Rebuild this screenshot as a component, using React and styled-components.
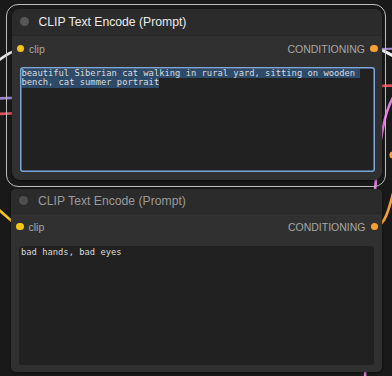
import React from 'react';
import styled, { createGlobalStyle } from 'styled-components';

const Global = createGlobalStyle`
  *, *::before, *::after { box-sizing: border-box; }
  html, body { margin: 0; padding: 0; background: #191919; }
  body { width: 392px; height: 376px; overflow: hidden; font-family: "Liberation Sans", Arial, sans-serif; }
`;

const Canvas = styled.div`
  position: relative;
  width: 392px;
  height: 376px;
  overflow: hidden;
  background: #191919;
  padding: 3.5px 0 0 6px;
  display: flex;
  flex-direction: column;
  align-items: flex-start;
`;

const Wires = styled.svg`
  position: absolute;
  left: 0;
  top: 0;
  width: 392px;
  height: 376px;
  z-index: 0;
  pointer-events: none;
`;

const Selection = styled.div`
  position: relative;
  z-index: 1;
  width: 380px;
  height: 183px;
  border: 1.5px solid #bdbdbd;
  border-radius: 12px;
  padding: 4px 0 0 4.5px;
  flex: none;
`;

const Node = styled.div`
  position: relative;
  z-index: 1;
  flex: none;
  width: ${p => p.$w}px;
  height: ${p => p.$h}px;
  margin: ${p => p.$m || '0'};
  background: #303030;
  border-radius: ${p => p.$r}px;
  overflow: hidden;
  display: flex;
  flex-direction: column;
  box-shadow: 0 1px 3px rgba(0, 0, 0, 0.45);
`;

const TitleBar = styled.div`
  flex: none;
  height: ${p => p.$h}px;
  display: flex;
  align-items: center;
  gap: 10px;
  padding-left: 8px;
  background: #2b2b2b;
  border-bottom: 1px solid #272727;
  color: ${p => (p.$active ? '#ececec' : '#9a9a9a')};
  font-size: 12.2px;
  white-space: nowrap;
`;

const TitleDot = styled.span`
  width: 9px;
  height: 9px;
  border-radius: 50%;
  background: ${p => (p.$active ? '#575757' : '#4e4e4e')};
  flex: none;
`;

const SlotRow = styled.div`
  flex: none;
  height: 26px;
  display: flex;
  align-items: center;
  justify-content: space-between;
  padding: 0 4px 0 5px;
  font-size: 10.5px;
  color: #a6a6a6;
`;

const Slot = styled.div`
  display: flex;
  align-items: center;
  gap: 5px;
`;

const SlotDot = styled.span`
  width: 7.5px;
  height: 7.5px;
  border-radius: 50%;
  background: ${p => p.$color};
  flex: none;
`;

const Prompt = styled.div`
  flex: 1;
  margin: ${p => (p.$focused ? '5px 7px 8px 8px' : '6.5px 8px 6.5px 8px')};
  background: #212121;
  border-radius: 3px;
  padding: 2px;
  box-shadow: ${p => (p.$focused ? 'inset 0 0 0 1.5px #7ca8dd' : 'none')};
  font-family: "DejaVu Sans Mono", "Liberation Mono", monospace;
  font-size: 8.8px;
  line-height: 9.8px;
  color: #dcdcdc;
`;

const Line = styled.span`
  display: block;
  width: fit-content;
  height: 9.8px;
  white-space: pre;
  background: ${p => (p.$selected ? '#2d4a69' : 'transparent')};
`;

const wireProps = { fill: 'none', strokeWidth: 2.6, strokeLinecap: 'round' };

export default function App() {
  return (
    <>
      <Global />
      <Canvas>
        <Wires viewBox="0 0 392 376">
          <path d="M -3 62 Q 8 52 21 49" stroke="#e6e6e6" {...wireProps} />
          <path d="M -5 98.5 L 24 97.5" stroke="#9c80d2" {...wireProps} />
          <path d="M -5 114 L 24 113" stroke="#e0505a" {...wireProps} />
          <path d="M -4 207 Q 8 218 19 227" stroke="#f2c51f" {...wireProps} />
          <path d="M 376 49 L 400 48.5" stroke="#a58ad6" {...wireProps} strokeWidth={2} />
          <path d="M 375 48 C 384 50 390 54 400 60" stroke="#eeeeee" {...wireProps} strokeWidth={3} />
          <path d="M 376 86 L 400 85.5" stroke="#e0505a" {...wireProps} />
          <path d="M 401 86 C 388 100 383 120 378 160 S 366 330 365 380" stroke="#e07ce0" {...wireProps} />
          <path d="M 375 227 C 386 226 390 205 396 182" stroke="#f5a030" {...wireProps} />
          <circle cx="393" cy="155" r="3.6" fill="#f5a030" />
        </Wires>

        <Selection>
          <Node $w={370} $h={171} $r={8}>
            <TitleBar $h={27} $active>
              <TitleDot $active />
              <span>CLIP Text Encode (Prompt)</span>
            </TitleBar>
            <SlotRow>
              <Slot>
                <SlotDot $color="#f5c518" />
                <span>clip</span>
              </Slot>
              <Slot>
                <span>CONDITIONING</span>
                <SlotDot $color="#f7a030" />
              </Slot>
            </SlotRow>
            <Prompt $focused>
              <Line $selected>beautiful Siberian cat walking in rural yard, sitting on wooden </Line>
              <Line $selected>bench, cat summer portrait</Line>
            </Prompt>
          </Node>
        </Selection>

        <Node $w={371} $h={183} $r={5} $m="2px 0 0 5px">
          <TitleBar $h={25}>
            <TitleDot />
            <span>CLIP Text Encode (Prompt)</span>
          </TitleBar>
          <SlotRow>
            <Slot>
              <SlotDot $color="#f5c518" />
              <span>clip</span>
            </Slot>
            <Slot>
              <span>CONDITIONING</span>
              <SlotDot $color="#f7a030" />
            </Slot>
          </SlotRow>
          <Prompt>
            <Line>bad hands, bad eyes</Line>
          </Prompt>
        </Node>
      </Canvas>
    </>
  );
}
